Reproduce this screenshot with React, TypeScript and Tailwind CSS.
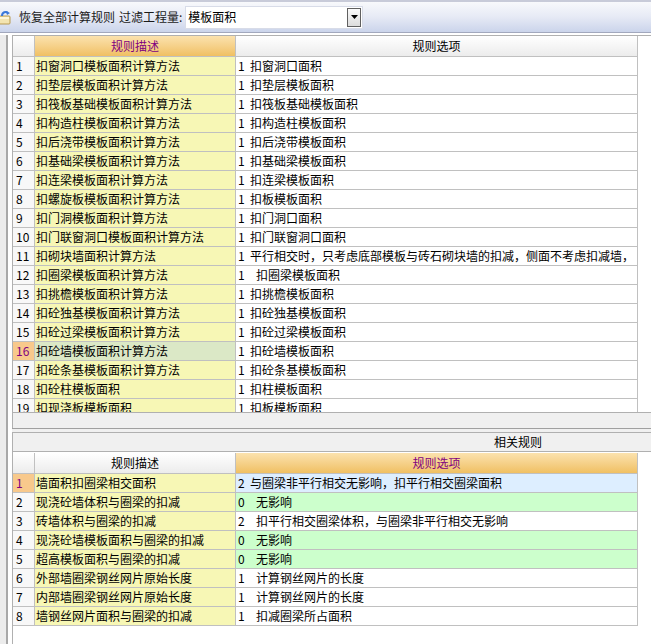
import React from 'react';

type Row = { no: number; desc: string; num: string; opt: string; indent?: boolean; bg?: string; sel?: boolean };

const topRows: Row[] = [
  { no: 1, desc: '扣窗洞口模板面积计算方法', num: '1', opt: '扣窗洞口面积' },
  { no: 2, desc: '扣垫层模板面积计算方法', num: '1', opt: '扣垫层模板面积' },
  { no: 3, desc: '扣筏板基础模板面积计算方法', num: '1', opt: '扣筏板基础模板面积' },
  { no: 4, desc: '扣构造柱模板面积计算方法', num: '1', opt: '扣构造柱模板面积' },
  { no: 5, desc: '扣后浇带模板面积计算方法', num: '1', opt: '扣后浇带模板面积' },
  { no: 6, desc: '扣基础梁模板面积计算方法', num: '1', opt: '扣基础梁模板面积' },
  { no: 7, desc: '扣连梁模板面积计算方法', num: '1', opt: '扣连梁模板面积' },
  { no: 8, desc: '扣螺旋板模板面积计算方法', num: '1', opt: '扣板模板面积' },
  { no: 9, desc: '扣门洞模板面积计算方法', num: '1', opt: '扣门洞口面积' },
  { no: 10, desc: '扣门联窗洞口模板面积计算方法', num: '1', opt: '扣门联窗洞口面积' },
  { no: 11, desc: '扣砌块墙面积计算方法', num: '1', opt: '平行相交时，只考虑底部模板与砖石砌块墙的扣减，侧面不考虑扣减墙，' },
  { no: 12, desc: '扣圈梁模板面积计算方法', num: '1', opt: '扣圈梁模板面积', indent: true },
  { no: 13, desc: '扣挑檐模板面积计算方法', num: '1', opt: '扣挑檐模板面积' },
  { no: 14, desc: '扣砼独基模板面积计算方法', num: '1', opt: '扣砼独基模板面积' },
  { no: 15, desc: '扣砼过梁模板面积计算方法', num: '1', opt: '扣砼过梁模板面积' },
  { no: 16, desc: '扣砼墙模板面积计算方法', num: '1', opt: '扣砼墙模板面积', sel: true },
  { no: 17, desc: '扣砼条基模板面积计算方法', num: '1', opt: '扣砼条基模板面积' },
  { no: 18, desc: '扣砼柱模板面积', num: '1', opt: '扣柱模板面积' },
  { no: 19, desc: '扣现浇板模板面积', num: '1', opt: '扣板模板面积' },
];

const bottomRows: Row[] = [
  { no: 1, desc: '墙面积扣圈梁相交面积', num: '2', opt: '与圈梁非平行相交无影响，扣平行相交圈梁面积', bg: 'bg-[#ddeeff]', sel: true },
  { no: 2, desc: '现浇砼墙体积与圈梁的扣减', num: '0', opt: '无影响', indent: true, bg: 'bg-[#ccffcc]' },
  { no: 3, desc: '砖墙体积与圈梁的扣减', num: '2', opt: '扣平行相交圈梁体积，与圈梁非平行相交无影响', indent: true },
  { no: 4, desc: '现浇砼墙模板面积与圈梁的扣减', num: '0', opt: '无影响', indent: true, bg: 'bg-[#ccffcc]' },
  { no: 5, desc: '超高模板面积与圈梁的扣减', num: '0', opt: '无影响', indent: true, bg: 'bg-[#ccffcc]' },
  { no: 6, desc: '外部墙圈梁钢丝网片原始长度', num: '1', opt: '计算钢丝网片的长度', indent: true },
  { no: 7, desc: '内部墙圈梁钢丝网片原始长度', num: '1', opt: '计算钢丝网片的长度', indent: true },
  { no: 8, desc: '墙钢丝网片面积与圈梁的扣减', num: '1', opt: '扣减圈梁所占面积', indent: true },
];

const orange = 'bg-gradient-to-b from-[#fbe2ae] to-[#f0c062] text-[#800080]';
const gray = 'bg-gradient-to-b from-[#ffffff] to-[#ececec] text-black';

const GridRow = ({ r, topSel }: { r: Row; topSel?: boolean }) => (
  <div className="flex h-[19px] leading-[18px]">
    <div
      className={`w-[22px] shrink-0 border-r border-b border-[#c0c0c0] pl-[3px] ${
        r.sel ? 'bg-[#f8c98c] text-[#800080]' : 'bg-[#f8f8f8]'
      }`}
    >
      {r.no}
    </div>
    <div
      className={`w-[201px] shrink-0 border-r border-b border-[#c0c0c0] pl-[1px] overflow-hidden whitespace-nowrap ${
        r.sel && topSel ? 'bg-[#dbe8c6]' : 'bg-[#f7f7b5]'
      }`}
    >
      {r.desc}
    </div>
    <div className={`w-[402px] shrink-0 border-r border-b border-[#c0c0c0] flex overflow-hidden whitespace-nowrap ${r.bg ?? 'bg-white'}`}>
      <span className={`${r.indent ? 'w-[20px]' : 'w-[14px]'} shrink-0 pl-[2px]`}>{r.num}</span>
      <span>{r.opt}</span>
    </div>
  </div>
);

const Header = ({ descCls, optCls }: { descCls: string; optCls: string }) => (
  <div className="flex h-[21px] leading-[20px]">
    <div className={`w-[22px] shrink-0 border-r border-b border-[#c0c0c0] ${gray}`} />
    <div className={`w-[201px] shrink-0 border-r border-b border-[#c0c0c0] text-center ${descCls}`}>规则描述</div>
    <div className={`w-[402px] shrink-0 border-r border-b border-[#c0c0c0] text-center ${optCls}`}>规则选项</div>
  </div>
);

const App = () => {
  return (
    <div className="w-[651px] h-[644px] overflow-hidden bg-white flex flex-col text-[12px] text-black font-['Noto_Sans_CJK_SC','Noto_Sans',sans-serif]">
      {/* toolbar */}
      <div className="h-[33px] shrink-0 flex items-center border-t-2 border-b border-t-[#c8cbd9] border-b-[#a2a8bd] bg-gradient-to-b from-[#f8f9fc] via-[#e6eaf5] to-[#cbd4eb]">
        <svg width="16" height="16" viewBox="0 0 16 16" className="ml-[-4px] shrink-0">
          <rect x="1" y="7" width="13" height="8" rx="1" fill="#f3e4b0" stroke="#b89a50" />
          <rect x="2" y="8" width="11" height="2" fill="#fff6d8" />
          <path d="M6 7 C6 3 10 2 12 4" fill="none" stroke="#3b78d8" strokeWidth="2" />
          <path d="M10 2 L14 4 L11 6 Z" fill="#3b78d8" />
        </svg>
        <span className="ml-[7px] whitespace-nowrap text-[#1a1a1a]">恢复全部计算规则</span>
        <span className="ml-[4px] whitespace-nowrap text-[#1a1a1a]">过滤工程量:</span>
        <div className="ml-[3px] w-[178px] h-[23px] bg-white border border-[#d8dce8] flex items-center justify-between">
          <span className="pl-[2px]">模板面积</span>
          <div className="w-[14px] h-[19px] mr-[1px] border border-[#606060] bg-gradient-to-b from-[#fbfbfb] to-[#dcdcdc] flex items-center justify-center">
            <svg width="7" height="4" viewBox="0 0 7 4">
              <path d="M0 0 H7 L3.5 4 Z" fill="#000" />
            </svg>
          </div>
        </div>
      </div>

      <div className="flex-1 flex min-h-0 pt-[2px]">
        {/* left strip */}
        <div className="w-[12px] shrink-0 flex">
          <div className="w-[6px] bg-[#ececec]" />
          <div className="w-[2px] bg-[#a8a8a8]" />
        </div>

        <div className="flex-1 flex flex-col min-w-0">
          {/* top grid */}
          <div className="h-[377px] shrink-0 overflow-hidden border-t border-l border-[#b0b0b0]">
            <Header descCls={orange} optCls={gray} />
            {topRows.map((r) => (
              <GridRow key={r.no} r={r} topSel />
            ))}
          </div>
          <div className="h-[16px] shrink-0 bg-[#f0f0f0] border-t border-l border-[#b0b0b0]" />
          <div className="h-[4px] shrink-0 bg-[#f0f0f0] border-t border-[#a0a0a0]" />

          {/* related rules bar */}
          <div className="h-[20px] shrink-0 leading-[18px] bg-[#f0f0f0] border-t border-b border-l border-[#b0b0b0] pl-[481px]">
            相关规则
          </div>

          {/* bottom grid */}
          <div className="flex-1 border-l border-[#b0b0b0] pt-[1px]">
            <Header descCls={gray} optCls={orange} />
            {bottomRows.map((r) => (
              <GridRow key={r.no} r={r} />
            ))}
          </div>
        </div>
      </div>
    </div>
  );
};

export default App;
